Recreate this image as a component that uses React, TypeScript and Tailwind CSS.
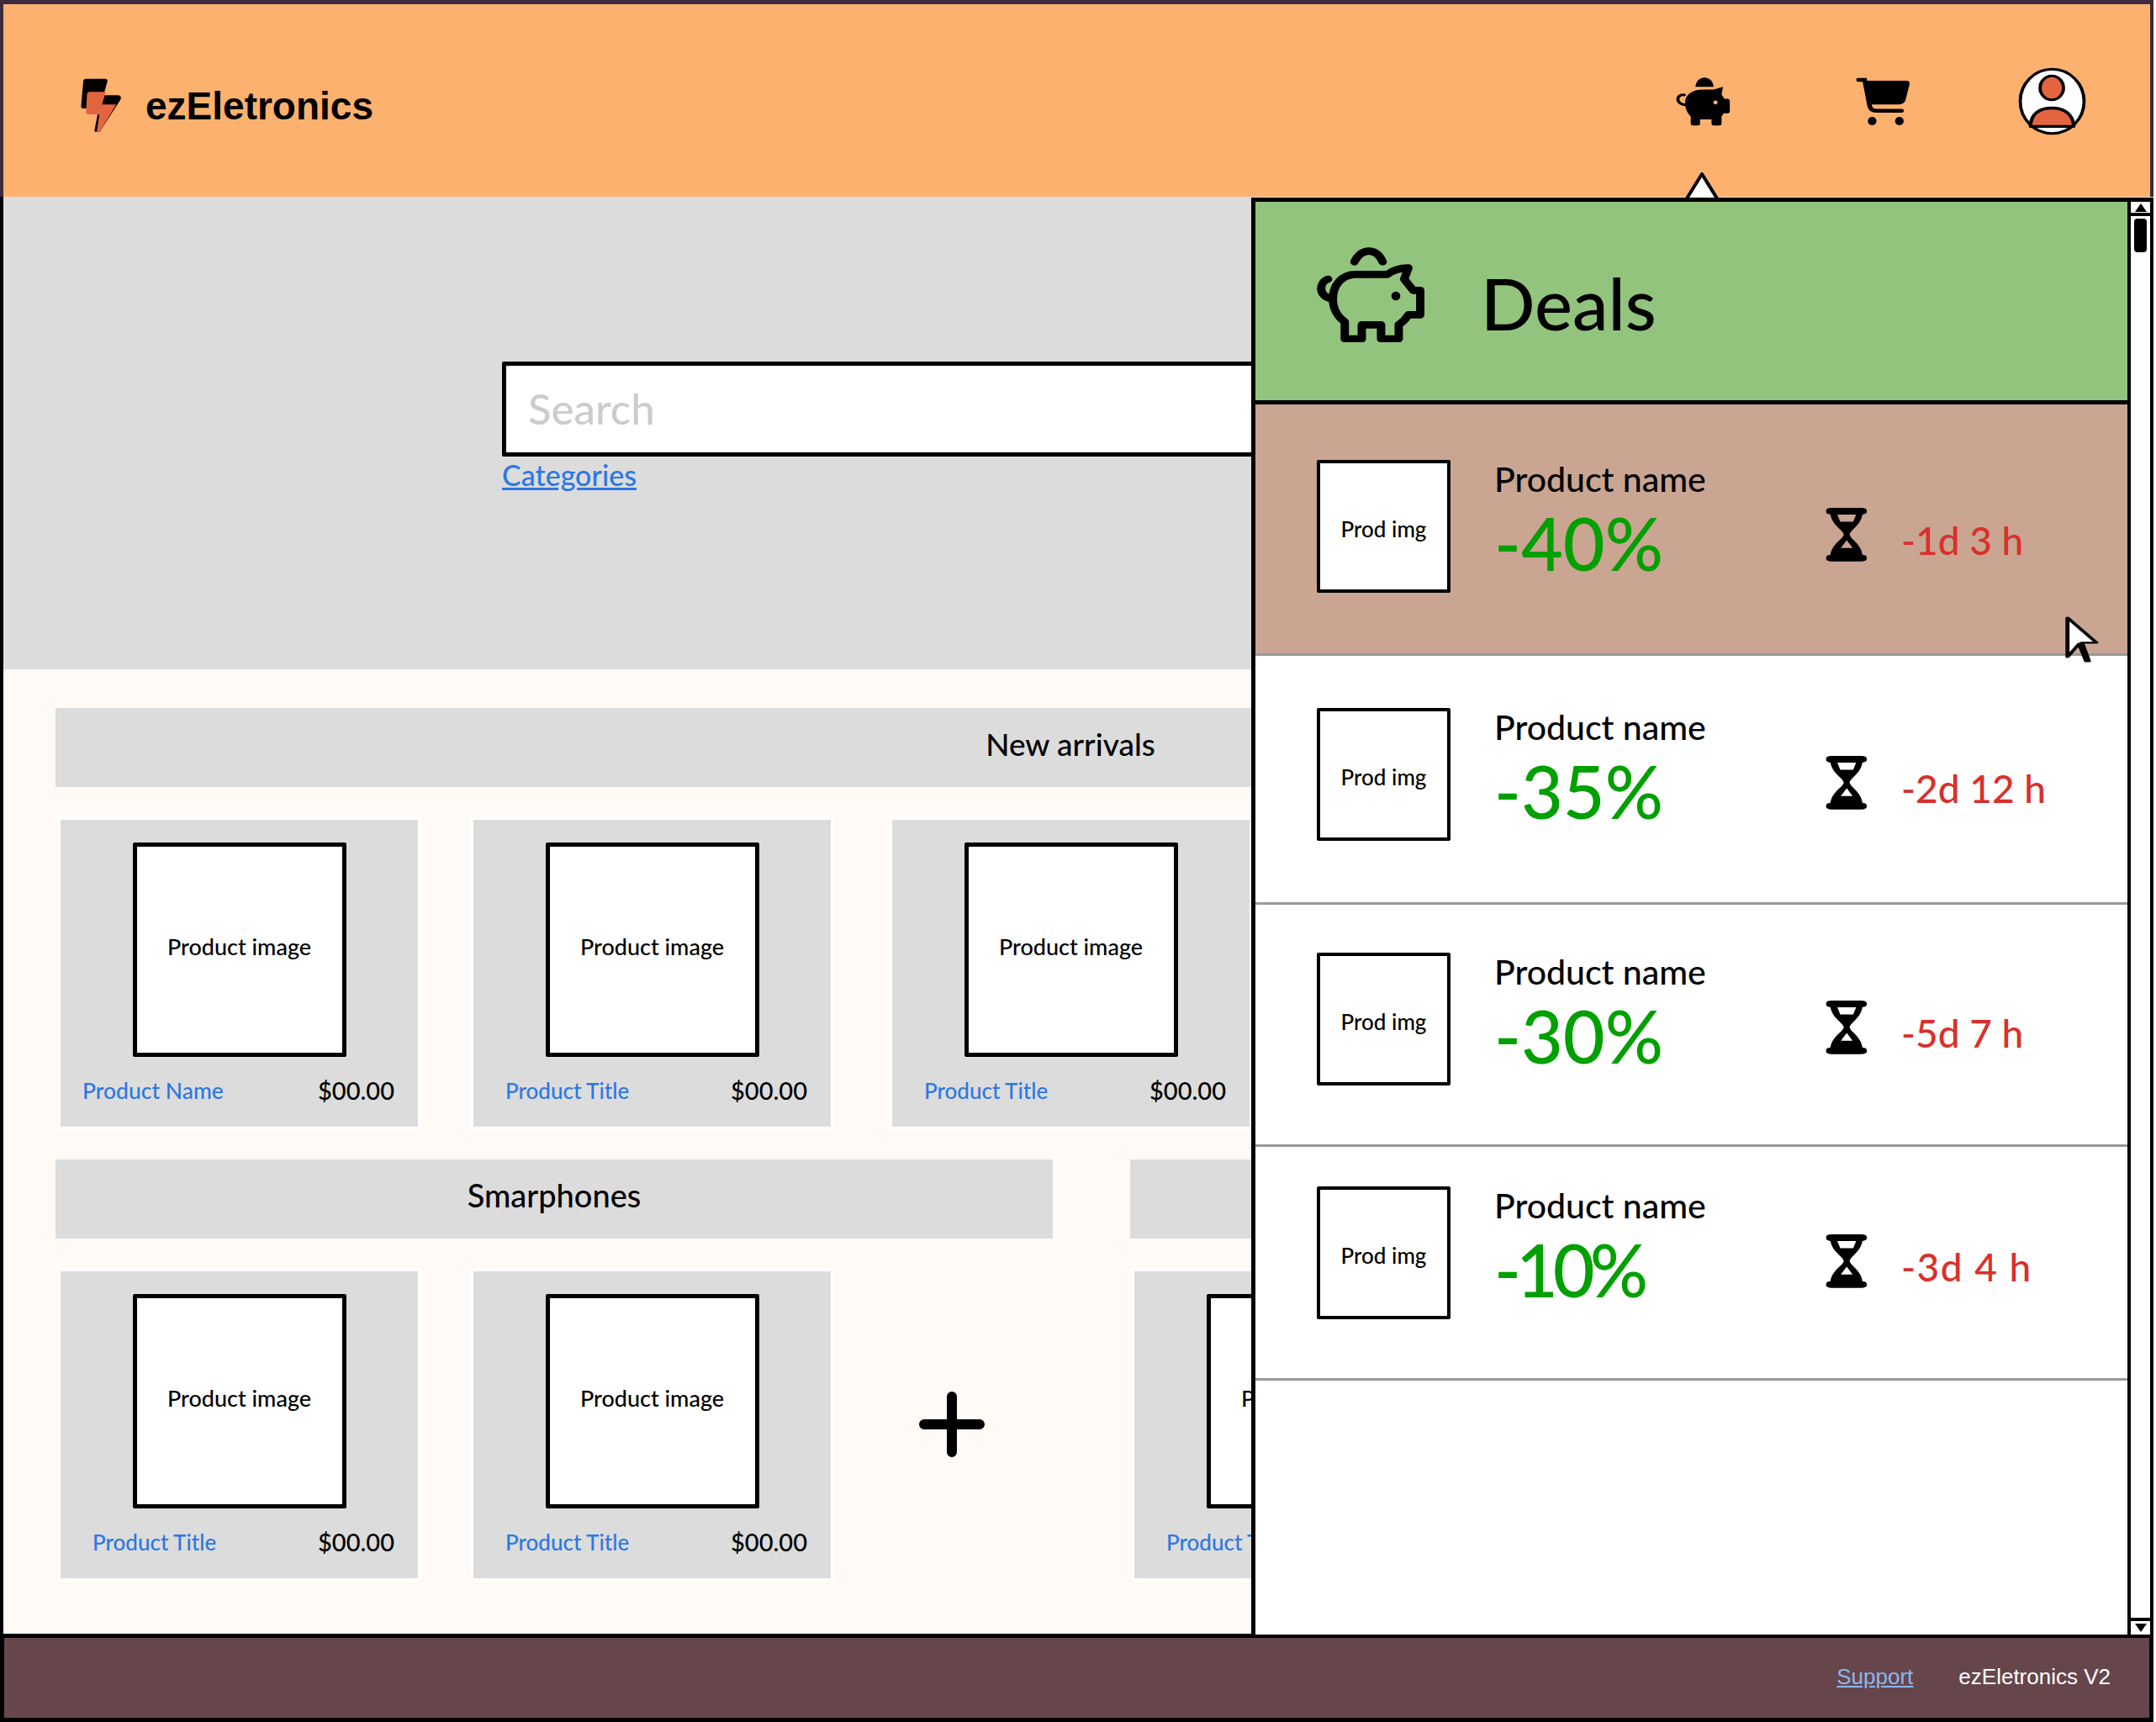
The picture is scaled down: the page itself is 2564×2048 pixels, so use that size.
const sketchFont = { fontFamily: '"Lato", "Noto Sans", sans-serif' };

const firstRow: { title: string; pad: string; gap: string; size: string }[] = [
  { title: "Product Name", pad: "pl-[26px]", gap: "mr-[58px]", size: "text-[26.5px]" },
  { title: "Product Title", pad: "pl-[38px]", gap: "mr-[65px]", size: "text-[26px]" },
  { title: "Product Title", pad: "pl-[38px]", gap: "", size: "text-[26px]" },
];

const deals = [
  { pct: "-40%", pctClass: "", time: "-1d 3 h", timeClass: "", row: "h-[299px] pt-[66px] bg-[#c9a592]" },
  { pct: "-35%", pctClass: "", time: "-2d 12 h", timeClass: "", row: "h-[296px] pt-[62px] bg-white" },
  { pct: "-30%", pctClass: "", time: "-5d 7 h", timeClass: "", row: "h-[288px] pt-[57px] bg-white" },
  { pct: "-10%", pctClass: "tracking-[-6px]", time: "-3d 4 h", timeClass: "tracking-[1.5px]", row: "h-[278px] pt-[47px] bg-white" },
];

function PigFilled() {
  return (
    <svg viewBox="220 153 155 175" preserveAspectRatio="none" className="h-[58px] w-[66px]">
      <path d="M277 187C280 143 325 143 328 187Z" fill="#000" />
      <path d="M248 245C248 215 268 197 298 197H328L354 187L350 215L358 230H368Q373 232 373 238V275Q373 282 365 282H356C352 290 350 292 350 296V320Q350 326 344 326H328Q322 326 322 320V304H290V320Q290 326 284 326H270Q264 326 264 320V294C254 280 248 265 248 245Z" fill="#000" />
      <path d="M246 216C222 212 220 250 250 252" fill="none" stroke="#000" strokeWidth="9" strokeLinecap="round" />
      <ellipse cx="333" cy="243" rx="6" ry="7" fill="#fdb16f" />
    </svg>
  );
}

function Cart() {
  return (
    <svg viewBox="725 153 155 175" preserveAspectRatio="none" className="h-[58px] w-[66px]">
      <path d="M735 162H752L766 255Q768 273 785 273H855" fill="none" stroke="#000" strokeWidth="13" strokeLinecap="round" />
      <path d="M752 165H868Q880 165 877 180L866 235Q862 250 846 250H765Z" fill="#000" />
      <ellipse cx="773" cy="310" rx="12" ry="15" fill="#000" />
      <ellipse cx="849" cy="310" rx="12" ry="15" fill="#000" />
    </svg>
  );
}

function Profile() {
  return (
    <svg viewBox="1180 118 192 244" preserveAspectRatio="none" className="h-[81px] w-[81px]">
      <ellipse cx="1276" cy="240" rx="90" ry="115" fill="#fff" stroke="#000" strokeWidth="9" />
      <ellipse cx="1275" cy="192" rx="33" ry="43" fill="#e36540" stroke="#000" strokeWidth="9" />
      <path d="M1215 330C1215 285 1240 264 1275 264C1310 264 1335 285 1337 330Z" fill="#e36540" stroke="#000" strokeWidth="10" strokeLinejoin="round" />
    </svg>
  );
}

function Logo() {
  return (
    <svg viewBox="215 275 108 195" preserveAspectRatio="none" className="h-[65px] w-[48px]">
      <path d="M228 277H282Q288 278 286 288L276 336H315Q326 338 321 352L266 466H255Q251 466 252 460L263 383H222Q215 382 216 374L222 284Q223 278 228 277Z" fill="#000" />
      <path d="M238 324H276Q282 325 280 332L272 369H310L266 466H258L265 404H236Q228 403 229 396L232 330Q233 325 238 324Z" fill="#e36540" />
    </svg>
  );
}

function PigOutline() {
  return (
    <svg viewBox="225 218 335 342" preserveAspectRatio="none" className="mb-[16px] h-[114px] w-[128px] shrink-0">
      <g fill="none" stroke="#000" strokeWidth="26" strokeLinecap="round" strokeLinejoin="round">
        <path d="M342 273C365 222 410 222 430 273" />
        <path d="M345 318H445C460 305 480 295 510 295L497 335L525 375H547V462H510C500 480 490 490 480 497V548H425V498H365V548H312V487C290 470 275 440 275 405C275 355 305 318 345 318Z" />
        <path d="M260 335C232 345 228 395 270 405" />
      </g>
      <ellipse cx="471" cy="395" rx="14" ry="16" fill="#000" />
    </svg>
  );
}

function Hourglass() {
  return (
    <svg viewBox="1000 402 70 193" preserveAspectRatio="none" className="mt-[57px] h-[64px] w-[49px] shrink-0">
      <rect x="1001" y="402" width="69" height="24" rx="9" fill="#000" />
      <rect x="1001" y="570" width="69" height="24" rx="9" fill="#000" />
      <path
        fillRule="evenodd"
        d="M1008 420C1010 465 1030 480 1031 498C1030 515 1010 530 1008 575H1063C1061 530 1042 515 1041 498C1042 480 1061 465 1063 420ZM1020 426H1052L1047 452H1025ZM1036 518L1046 546H1026Z"
        fill="#000"
      />
    </svg>
  );
}

function ProductCard({ title, pad, size = "text-[26px]", className = "" }: { title: string; pad: string; size?: string; className?: string }) {
  return (
    <div className={`h-[373px] w-[433px] shrink-0 border-4 border-white bg-[#dcdcdc] pt-[27px] ${className}`}>
      <div className="mx-auto flex h-[255px] w-[254px] items-center justify-center rounded-[2px] border-[5px] border-black bg-white pb-[6px] text-[27px] text-black">
        Product image
      </div>
      <div className={`mt-[26px] flex items-center justify-between pr-[28px] leading-[28px] ${pad}`}>
        <span className={`text-[#2b78e4] ${size}`}>{title}</span>
        <span className="text-[29px] text-black">$00.00</span>
      </div>
    </div>
  );
}

function DealRow({ pct, pctClass, time, timeClass, row }: { pct: string; pctClass: string; time: string; timeClass: string; row: string }) {
  return (
    <div className={`flex shrink-0 items-start border-b-[3px] border-[#999999] pl-[73px] ${row}`}>
      <div className="flex h-[158px] w-[159px] shrink-0 items-center justify-center rounded-[2px] border-[4px] border-black bg-white pt-[6px] text-[26px] text-black">
        Prod img
      </div>
      <div className="ml-[52px] w-[394px] shrink-0">
        <div className="-mt-[1px] text-[41px] leading-[48px] text-black">Product name</div>
        <div className={`mt-[7px] text-[86px] leading-[90px] text-[#00a000] ${pctClass}`}>{pct}</div>
      </div>
      <Hourglass />
      <div className={`ml-[41px] mt-[68px] text-[46px] leading-[56px] text-[#d9302b] ${timeClass}`}>{time}</div>
    </div>
  );
}

export default function App() {
  return (
    <div className="relative flex h-[2048px] w-[2561px] flex-col overflow-hidden bg-white font-medium" style={sketchFont}>
      <header className="flex h-[234px] shrink-0 items-center border-x-[4px] border-t-[5px] border-[#3d2b3d] bg-[#fdb16f] pl-[92px]">
        <div className="mt-[12px] flex items-center">
          <Logo />
          <span className="ml-[29px] mt-[1px] text-[46px] font-bold text-black" style={{ fontFamily: '"Liberation Sans", sans-serif' }}>
            ezEletronics
          </span>
        </div>
        <div className="ml-auto mr-[76px] mt-[2px] flex items-center">
          <PigFilled />
          <div className="ml-[148px]">
            <Cart />
          </div>
          <div className="ml-[128px]">
            <Profile />
          </div>
        </div>
      </header>

      <main className="min-h-0 flex-1 overflow-hidden border-l-[4px] border-black">
        <section className="h-[562px] bg-[#dcdcdc] pl-[593px] pt-[196px]">
          <input
            readOnly
            placeholder="Search"
            className="block h-[113px] w-[1600px] rounded-[2px] border-[5px] border-black bg-white px-[26px] pb-[2px] text-[51px] text-black placeholder:text-[#cccccc]"
          />
          <a className="mt-[2px] block w-fit text-[34px] leading-[40px] text-[#2b78e4] underline">Categories</a>
        </section>

        <section className="h-[1147px] bg-[#fffaf5] pl-[62px] pt-[46px]">
          <div className="flex h-[94px] w-[2414px] items-center justify-center bg-[#dcdcdc] pb-[8px] text-[37px] text-black">New arrivals</div>
          <div className="ml-[2px] mt-[35px] flex">
            {firstRow.map((card, i) => (
              <ProductCard key={i} title={card.title} pad={card.pad} size={card.size} className={card.gap} />
            ))}
          </div>
          <div className="mt-[35px] flex">
            <div className="flex h-[94px] w-[1186px] shrink-0 items-center justify-center bg-[#dcdcdc] pb-[9px] text-[38px] text-black">Smarphones</div>
            <div className="ml-[92px] h-[94px] w-[1186px] shrink-0 bg-[#dcdcdc]" />
          </div>
          <div className="ml-[2px] mt-[35px] flex">
            <ProductCard title="Product Title" pad="pl-[38px]" className="mr-[58px]" />
            <ProductCard title="Product Title" pad="pl-[38px]" />
            <svg viewBox="0 0 78 78" className="ml-[101px] mr-[174px] mt-[147px] h-[78px] w-[78px] shrink-0">
              <path d="M39 6V72M6 39H72" stroke="#000" strokeWidth="12" strokeLinecap="round" />
            </svg>
            <ProductCard title="Product Title" pad="pl-[38px]" />
          </div>
        </section>
      </main>

      <footer className="flex h-[105px] shrink-0 items-center justify-end border-[5px] border-black bg-[#66464b] pb-[2px] pr-[46px] text-[26px] font-normal" style={{ fontFamily: '"Liberation Sans", sans-serif' }}>
        <a className="text-[#8ab8f0] underline">Support</a>
        <span className="ml-[54px] text-white">ezEletronics V2</span>
      </footer>

      {/* caret above the open deals panel */}
      <svg viewBox="0 0 40 31" className="absolute left-[2004px] top-[205px] h-[31px] w-[40px]">
        <path d="M2 31L20 2L38 31" fill="#fff" stroke="#000" strokeWidth="4" strokeLinejoin="round" />
      </svg>

      <aside className="absolute left-[1488px] top-[235px] flex h-[1709px] w-[1073px] border-l-[5px] border-t-[5px] border-black bg-white">
        <div className="flex min-w-0 flex-1 flex-col">
          <div className="flex h-[241px] shrink-0 items-center border-b-[5px] border-black bg-[#93c47d] pl-[73px]">
            <PigOutline />
            <span className="ml-[67px] mt-[6px] text-[85px] text-black">Deals</span>
          </div>
          {deals.map((d) => (
            <DealRow key={d.pct} {...d} />
          ))}
        </div>
        <div className="flex w-[31px] shrink-0 flex-col border-x-[4px] border-black bg-white">
          <div className="flex h-[17px] shrink-0 items-center justify-center border-b-[4px] border-black">
            <div className="h-0 w-0 border-x-[7px] border-b-[10px] border-x-transparent border-b-black" />
          </div>
          <div className="mx-auto mt-[3px] h-[40px] w-[15px] rounded-[4px] bg-black" />
          <div className="mt-auto flex h-[20px] shrink-0 items-center justify-center border-t-[4px] border-black">
            <div className="h-0 w-0 border-x-[7px] border-t-[10px] border-x-transparent border-t-black" />
          </div>
        </div>
      </aside>

      {/* hover pointer over the first deal */}
      <svg viewBox="1412 787 58 168" preserveAspectRatio="none" className="absolute left-[2456px] top-[732px] h-[56px] w-[40px]">
        <path d="M1416 795V935L1436 888L1448 950H1453L1441 884H1466Z" fill="#fff" stroke="#000" strokeWidth="7" strokeLinejoin="round" />
      </svg>
    </div>
  );
}
